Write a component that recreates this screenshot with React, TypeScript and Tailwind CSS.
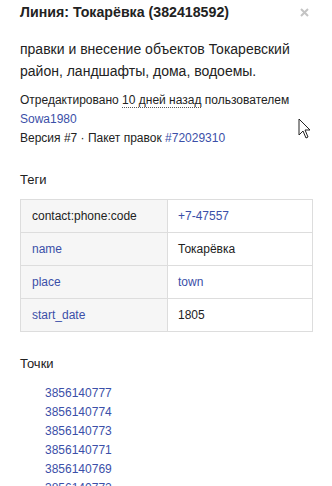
import React from 'react'

const tags = [
  { k: 'contact:phone:code', v: '+7-47557', kLink: false, vLink: true },
  { k: 'name', v: 'Токарёвка', kLink: true, vLink: false },
  { k: 'place', v: 'town', kLink: true, vLink: true },
  { k: 'start_date', v: '1805', kLink: true, vLink: false },
]

const nodes = ['3856140777', '3856140774', '3856140773', '3856140771', '3856140769', '3856140772']

const App = () => {
  return (
    <div className="relative w-[332px] h-[486px] overflow-hidden bg-white text-[#222] font-['Liberation_Sans',Arial,sans-serif]">
      <div className="flex items-start justify-between pl-5 pr-[23px] pt-0">
        <h2 className="text-[14.2px] font-bold leading-[24px] text-[#222]">Линия: Токарёвка (382418592)</h2>
        <svg className="mt-[8px]" width="9" height="9" viewBox="0 0 9 9">
          <path d="M1 1 L8 8 M8 1 L1 8" stroke="#c4c4c4" strokeWidth="2" />
        </svg>
      </div>

      <div className="px-5 pt-[14px]">
        <p className="text-[14px] leading-[22px]">правки и внесение объектов Токаревский район, ландшафты, дома, водоемы.</p>

        <div className="mt-[9px] text-[12px] leading-[19px]">
          <div>
            Отредактировано{' '}
            <span className="border-b border-dotted border-[#555]">10 дней назад</span> пользователем
          </div>
          <div className="text-[#3b4fa8]">Sowa1980</div>
          <div>
            Версия #7 · Пакет правок <span className="text-[#3b4fa8]">#72029310</span>
          </div>
        </div>

        <h4 className="mt-[22px] text-[13px] leading-[19px]">Теги</h4>

        <table className="mt-[10px] w-[293px] border-collapse text-[12px]">
          <tbody>
            {tags.map((t) => (
              <tr key={t.k} className="h-[33px]">
                <td className={`w-[147px] border border-[#ddd] bg-[#f6f6f6] px-[11px] ${t.kLink ? 'text-[#3b4fa8]' : ''}`}>{t.k}</td>
                <td className={`border border-[#ddd] px-[10px] ${t.vLink ? 'text-[#3b4fa8]' : ''}`}>{t.v}</td>
              </tr>
            ))}
          </tbody>
        </table>

        <h4 className="mt-[22px] text-[13px] leading-[19px]">Точки</h4>

        <ul className="mt-[11px] pl-[25px] text-[12px] leading-[19px] text-[#3b4fa8]">
          {nodes.map((n) => (
            <li key={n}>{n}</li>
          ))}
        </ul>
      </div>

      <svg className="absolute left-[298px] top-[118px]" width="14" height="22" viewBox="0 0 14 22">
        <path d="M1 1 L1 17 L5 13 L8 20 L10 19 L7 12 L12 12 Z" fill="white" stroke="#222" strokeWidth="1" strokeLinejoin="round" />
      </svg>
    </div>
  )
}

export default App
